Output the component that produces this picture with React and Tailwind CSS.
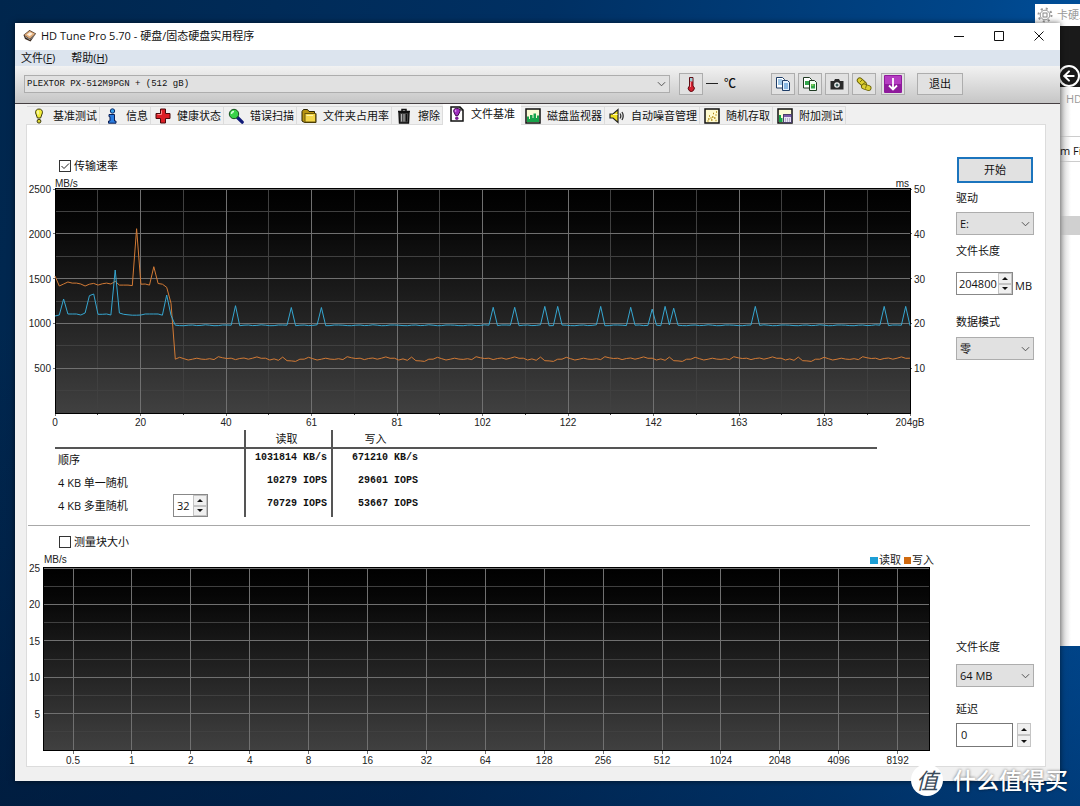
import React from "react";
import { FiArrowLeft } from "react-icons/fi";

/* ---------- DATA ---------- */

const BASE_READ = [982, 982, 980, 976, 974, 980, 982, 976, 978, 984, 980, 974, 976];
const BASE_WRITE = [
  600, 622, 606, 592, 600, 612, 602, 598, 606, 596, 628, 616, 608, 612, 596,
  608, 614, 600, 612, 626, 610, 612, 592, 604, 588, 624, 584, 582, 576, 600,
];

const READ_START = [
  1083, 1094, 1272, 1105, 1105, 1105, 1094, 1116, 1309, 1328, 1102, 1102, 1105,
  1094, 1596, 1116, 1102, 1096, 1092, 1092, 1094, 1105, 1105, 1105, 1105, 1092,
  1317, 1090,
];
const WRITE_START = [
  1529, 1417, 1440, 1462, 1450, 1450, 1440, 1417, 1438, 1446, 1428, 1442, 1450,
  1440, 1470, 1428, 1428, 1428, 1422, 2057, 1438, 1440, 1428, 1633, 1445, 1438,
  1403, 1225,
];
const READ_PEAKS = {
  42: 1198, 55: 1178, 62: 1178, 102: 1180, 107: 1180, 114: 1190, 117: 1190,
  127: 1190, 134: 1180, 139: 1160, 142: 1190, 144: 1170, 163: 1190, 193: 1190,
  198: 1190,
};

const POINTS = 200;
const samples = Array.from({ length: POINTS }, (_, i) => i);

const readSpeed = samples.map(
  (i) => READ_START[i] ?? READ_PEAKS[i] ?? BASE_READ[i % BASE_READ.length]
);
const writeSpeed = samples.map(
  (i) => WRITE_START[i] ?? BASE_WRITE[(i - 28) % BASE_WRITE.length]
);

const results = [
  { label: "顺序", read: "1031814 KB/s", write: "671210 KB/s" },
  { label: "4 KB 单一随机", read: "10279 IOPS", write: "29601 IOPS" },
  { label: "4 KB 多重随机", read: "70729 IOPS", write: "53667 IOPS", queue: true },
];

/* ---------- ICONS ---------- */

const Icon = ({ children }) => (
  <svg viewBox="0 0 16 16" className="w-4 h-4 shrink-0" aria-hidden="true">
    {children}
  </svg>
);

const DriveIcon = () => (
  <Icon>
    <path d="M1.5 7 7.5 2 14 5.500l-5.500 8L3 11z" fill="#3b2a1f" />
    <path d="M2.200 7 7.500 2.700l5.800 3-5.500 5z" fill="#e0ab78" />
    <path d="m4.800 6.600 3.200-2.400 2.800 1.500-3.200 2.600z" fill="#fdf0e0" />
    <path d="m3 8.500 5 3.200 4.800-5" stroke="#9a9a9a" fill="none" />
  </Icon>
);

const BulbIcon = () => (
  <Icon>
    <path d="M8 1C5.5 1 4.3 2.700 4.600 4.900L6.400 10h3.200l1.800-5.100C11.700 2.700 10.500 1 8 1z" fill="#f2ee3a" stroke="#3d3a10" />
    <path d="M7 2.500v4" stroke="#fff" />
    <circle cx="8" cy="13.200" r="1.900" fill="#d8d230" stroke="#3d3a10" />
  </Icon>
);

const InfoIcon = () => (
  <Icon>
    <circle cx="8.500" cy="3" r="2.200" fill="#3aa0e8" stroke="#0b2a66" />
    <path d="M5 6.500h5.500v6.500H12v2.200H4.500V13H6V8.700H5z" fill="#2b7de0" stroke="#0b1f55" />
  </Icon>
);

const HealthIcon = () => (
  <Icon>
    <path d="M5.500 1h5v4.500H15v5h-4.500V15h-5v-4.500H1v-5h4.500z" fill="#dc1f26" stroke="#4a0a0c" />
    <path d="M6.500 2.500v4H2.500" stroke="#ff8a8a" fill="none" />
  </Icon>
);

const ScanIcon = () => (
  <Icon>
    <path d="m9.500 9.500 4.700 4.700" stroke="#101a78" strokeWidth="3.200" strokeLinecap="round" />
    <circle cx="6" cy="6" r="4.700" fill="#39d24a" stroke="#154d1c" />
    <path d="M3.500 6A2.600 2.600 0 0 1 6 3.500" stroke="#d6ffd9" strokeWidth="1.400" fill="none" />
  </Icon>
);

const FolderIcon = () => (
  <Icon>
    <path d="M1 3.500 2.500 1.500h4l1.500 2h5.500v2H15V14.500H3.500L1 13z" fill="#b99412" stroke="#2c2403" />
    <rect x="4" y="5.500" width="10.500" height="8.500" fill="#f3d64a" stroke="#6b560a" />
    <path d="M5.500 7.500H12" stroke="#fff3a8" />
  </Icon>
);

const TrashIcon = () => (
  <Icon>
    <path d="M2 3.500h12M6 3V1.500h4V3" stroke="#111" strokeWidth="1.500" fill="none" />
    <path d="M3 4.500h10l-.5 10.500H3.500z" fill="#4a4a4a" stroke="#111" strokeWidth="1.400" />
    <path d="M5.500 6v7.500M8 6v7.500" stroke="#b5b5b5" />
    <path d="M10.500 6v7.500" stroke="#111" />
  </Icon>
);

const FileBenchIcon = () => (
  <Icon>
    <path d="M2 1h9l3 3v11H2z" fill="#fff" stroke="#111" strokeWidth="1.500" />
    <path d="M11 1v3h3" fill="none" stroke="#111" />
    <path d="M7.800 2.300c-2.400 0-3.500 1.500-3.100 3.400l2 4h2.200l2-4c.4-1.900-.7-3.400-3.100-3.400z" fill="#a02cc0" stroke="#3e0d4d" />
    <path d="M6.700 3.800v2" stroke="#e9b8f5" />
    <circle cx="7.800" cy="12.300" r="1.700" fill="#7b1c96" />
  </Icon>
);

const MonitorIcon = () => (
  <Icon>
    <rect x="1" y="1" width="14" height="14" fill="#fbfbd6" stroke="#111" strokeWidth="1.500" />
    <path d="M2 14V8.500h2V11h1V7h2.500v3h1V5.500H11V10h1V7.500h2V14z" fill="#17a34a" />
  </Icon>
);

const SpeakerIcon = () => (
  <Icon>
    <path d="M1 6h3l5-4.500v13L4 10H1z" fill="#f0e020" stroke="#222" strokeWidth="1.200" />
    <path d="M4 6.500h4.500" stroke="#fffac0" />
    <path d="M11 5.500c1 1.500 1 3.500 0 5M13 4c1.500 2.500 1.500 5.500 0 8" stroke="#333" strokeWidth="1.300" fill="none" />
  </Icon>
);

const RandomIcon = () => (
  <Icon>
    <rect x="1" y="1" width="14" height="14" fill="#fffbd0" stroke="#111" strokeWidth="1.500" />
    <path d="M4 11h1.500M7 12h1.500M10 10h1.500M5 8h1M8 9h1.500M11.500 7h1M9 5.500h1M12 4h1M3.500 13h1M11.500 12.500h1M6.500 10h1" stroke="#b08a10" strokeWidth="1.300" />
  </Icon>
);

const ExtraIcon = () => (
  <Icon>
    <rect x="1" y="1" width="14" height="14" fill="#fbfbd6" stroke="#111" strokeWidth="1.500" />
    <path d="M2 14V7h2v3h1.500v4z" fill="#17a34a" />
    <rect x="6.500" y="6.500" width="8" height="8" fill="#e8e4f4" stroke="#4a3f6b" />
    <path d="M7 8h7" stroke="#7a5aa8" strokeWidth="2" />
    <path d="M8 11h5M8 13h5" stroke="#8a84a0" strokeDasharray="1 1" />
  </Icon>
);

const ThermometerIcon = () => (
  <Icon>
    <path d="M6.500 1.500h3.500V10a3 3 0 1 1-3.500 0z" fill="#d3202f" stroke="#5c0d14" />
    <path d="M7 2h2.500v3.500H7z" fill="#9fd0d6" />
    <path d="M7.500 6v5" stroke="#ff9aa2" />
  </Icon>
);

const CopyTextIcon = () => (
  <Icon>
    <path d="M1.500 1.500h6l2 2V12h-8z" fill="#fff" stroke="#1d3c66" />
    <path d="M3 4h4M3 6h4M3 8h4" stroke="#3f8fd0" />
    <path d="M7.500 4.500h5l2 2v8h-7z" fill="#e4f2ff" stroke="#1d3c66" />
    <path d="M9 8h4M9 10h4M9 12h4" stroke="#2f7fc8" />
  </Icon>
);

const CopyImageIcon = () => (
  <Icon>
    <path d="M1.500 1.500h6l2 2V12h-8z" fill="#fff" stroke="#1f3a22" />
    <path d="M3 5h4v4H3z" fill="#31a64a" />
    <path d="M7.500 4.500h5l2 2v8h-7z" fill="#f2fff2" stroke="#1f3a22" />
    <path d="M9 8h4v4.500H9z" fill="#31a64a" />
    <path d="M9.500 9h2" stroke="#e5f26a" />
  </Icon>
);

const CameraIcon = () => (
  <Icon>
    <path d="M1.500 5H5l1-2h4l1 2h3.500v8.500h-13z" fill="#2a2a2a" />
    <circle cx="8" cy="9" r="2.800" fill="#f4f4f4" />
    <circle cx="8" cy="9" r="1.500" fill="#3c5c5c" />
  </Icon>
);

const PillsIcon = () => (
  <Icon>
    <path d="m3.800 4.500 4 3.500" stroke="#6b6208" strokeWidth="6" strokeLinecap="round" />
    <path d="m3.800 4.500 4 3.500" stroke="#ddd032" strokeWidth="4.200" strokeLinecap="round" />
    <path d="m8 10.500 4.500 1.500" stroke="#6b6208" strokeWidth="6" strokeLinecap="round" />
    <path d="m8 10.500 4.500 1.500" stroke="#ddd032" strokeWidth="4.200" strokeLinecap="round" />
    <path d="m4 6 2-2M6 9l3-2.500M9.500 12.500l1-3.500" stroke="#7a7010" />
  </Icon>
);

const DownloadIcon = () => (
  <svg viewBox="0 0 18 18" className="w-[18px] h-[18px]" aria-hidden="true">
    <rect width="18" height="18" rx="1" fill="#8f1a9c" />
    <rect x="1" y="1" width="16" height="8" fill="#b53cc2" />
    <path d="M9 3v11M5 10.500l4 4 4-4" stroke="#fff" strokeWidth="1.800" fill="none" />
  </svg>
);

const GearIcon = () => (
  <svg viewBox="0 0 16 16" className="w-4 h-4 shrink-0" aria-hidden="true">
    <circle cx="8" cy="8" r="6.500" fill="none" stroke="#999" strokeWidth="2" strokeDasharray="2 3.100" />
    <circle cx="8" cy="8" r="4.800" fill="#fff" stroke="#999" />
    <rect x="6" y="6" width="4" height="4" fill="none" stroke="#888" />
  </svg>
);

const Chevron = () => (
  <svg viewBox="0 0 10 6" className="w-[9px] h-[6px]" aria-hidden="true">
    <path d="m1 1 4 4 4-4" stroke="#444" fill="none" />
  </svg>
);

const Triangle = ({ down }) => (
  <svg viewBox="0 0 6 3" className="w-[6px] h-[3px]" aria-hidden="true">
    <path d={down ? "M0 0h6L3 3z" : "M0 3h6L3 0z"} fill="#111" />
  </svg>
);

const tabs = [
  { name: "基准测试", icon: <BulbIcon /> },
  { name: "信息", icon: <InfoIcon /> },
  { name: "健康状态", icon: <HealthIcon /> },
  { name: "错误扫描", icon: <ScanIcon /> },
  { name: "文件夹占用率", icon: <FolderIcon /> },
  { name: "擦除", icon: <TrashIcon /> },
  { name: "文件基准", icon: <FileBenchIcon />, active: true },
  { name: "磁盘监视器", icon: <MonitorIcon /> },
  { name: "自动噪音管理", icon: <SpeakerIcon /> },
  { name: "随机存取", icon: <RandomIcon /> },
  { name: "附加测试", icon: <ExtraIcon /> },
];

/* ---------- CONTROLS ---------- */

const ToolButton = ({ label, children }) => (
  <button
    type="button"
    aria-label={label}
    className="w-6 h-[22px] flex items-center justify-center border border-[#adadad] bg-[#e1e1e1]"
  >
    {children}
  </button>
);

const Select = ({ id, options }) => (
  <div className="grid items-center">
    <select
      id={id}
      className="col-start-1 row-start-1 w-full h-[23px] appearance-none border border-[#adadad] bg-[#e1e1e1] pl-[3px] text-[11px]"
    >
      {options.map((o) => (
        <option key={o}>{o}</option>
      ))}
    </select>
    <span className="col-start-1 row-start-1 justify-self-end mr-1 pointer-events-none">
      <Chevron />
    </span>
  </div>
);

const SpinButtons = () => (
  <div className="w-[14px] h-full shrink-0 flex flex-col">
    <button type="button" aria-label="增加" className="flex-1 flex items-center justify-center border border-[#c4c4c4] bg-[#f0f0f0]">
      <Triangle />
    </button>
    <button type="button" aria-label="减少" className="flex-1 flex items-center justify-center border border-[#c4c4c4] bg-[#f0f0f0]">
      <Triangle down />
    </button>
  </div>
);

const CheckBox = ({ label, defaultChecked }) => (
  <label className="flex items-center gap-[3px] h-4 pl-8">
    <span className="grid">
      <input
        type="checkbox"
        defaultChecked={defaultChecked}
        className="peer col-start-1 row-start-1 w-3 h-3 appearance-none border border-[#333] bg-white"
      />
      <svg viewBox="0 0 12 12" className="col-start-1 row-start-1 w-3 h-3 hidden peer-checked:block pointer-events-none">
        <path d="m2.500 6 2.500 2.500 5-5" stroke="#222" fill="none" />
      </svg>
    </span>
    {label}
  </label>
);

/* ---------- CHARTS ---------- */

const PlotFill = ({ id }) => (
  <defs>
    <linearGradient id={id} x1="0" y1="0" x2="0" y2="1">
      <stop offset="0" stopColor="#000" />
      <stop offset="0.15" stopColor="#060606" />
      <stop offset="1" stopColor="#404040" />
    </linearGradient>
  </defs>
);

const TransferChart = () => {
  const left = 28;
  const right = 883;
  const top = 11;
  const bottom = 235;
  const stepX = (right - left) / 10;
  const stepY = (bottom - top) / 5;
  const xLabels = ["0", "20", "40", "61", "81", "102", "122", "142", "163", "183", "204gB"];

  const toLine = (values) =>
    values
      .map((v, i) => {
        const x = left + (i * (right - left)) / (POINTS - 1);
        const y = bottom - (v / 2500) * (bottom - top);
        return `${x.toFixed(1)},${y.toFixed(1)}`;
      })
      .join(" ");

  return (
    <svg
      viewBox="0 0 919 252"
      className="block w-full h-auto font-['Liberation_Sans',sans-serif] text-[10px]"
      fill="#222"
      role="img"
      aria-label="传输速率"
    >
      <PlotFill id="plot-transfer" />
      <rect x={left} y={top} width={right - left} height={bottom - top} fill="url(#plot-transfer)" />

      <g shapeRendering="crispEdges">
        {samples.slice(0, 10).map((i) => (
          <path key={i} d={`M${left + (i + 0.5) * stepX} ${top}V${bottom + 2}`} stroke="#404040" />
        ))}
        {samples.slice(0, 5).map((i) => (
          <path key={i} d={`M${left} ${top + (i + 0.5) * stepY}H${right}`} stroke="#404040" />
        ))}
        {xLabels.map((l, i) => (
          <path key={l} d={`M${left + i * stepX} ${top}V${bottom + 3}`} stroke="#707070" />
        ))}
        {samples.slice(0, 5).map((i) => (
          <path key={i} d={`M${left - 2} ${top + i * stepY}H${right + 2}`} stroke="#707070" />
        ))}
        <rect x={left} y={top - 1} width={right - left} height={bottom - top + 1} fill="none" stroke="#000" />
      </g>

      <polyline points={toLine(writeSpeed)} fill="none" stroke="#d27a35" />
      <polyline points={toLine(readSpeed)} fill="none" stroke="#36a6d0" />

      <text x={left} y="9">MB/s</text>
      <text x={right - 1} y="9" textAnchor="end">ms</text>
      {[2500, 2000, 1500, 1000, 500].map((v, i) => (
        <text key={v} x={left - 4} y={top + i * stepY + 4} textAnchor="end">{v}</text>
      ))}
      {[50, 40, 30, 20, 10].map((v, i) => (
        <text key={v} x={right + 4} y={top + i * stepY + 4}>{v}</text>
      ))}
      {xLabels.map((l, i) => (
        <text key={l} x={left + i * stepX} y="248" textAnchor="middle">{l}</text>
      ))}
    </svg>
  );
};

const BlockSizeChart = () => {
  const left = 16;
  const right = 902;
  const top = 15;
  const bottom = 197;
  const firstX = 46;
  const stepX = 58.9;
  const stepY = (bottom - top) / 5;
  const sizes = [0.5, 1, 2, 4, 8, 16, 32, 64, 128, 256, 512, 1024, 2048, 4096, 8192];

  return (
    <svg
      viewBox="0 0 919 213"
      className="block w-full h-auto font-['Liberation_Sans',sans-serif] text-[10px]"
      fill="#222"
      role="img"
      aria-label="测量块大小"
    >
      <PlotFill id="plot-block" />
      <rect x={left} y={top} width={right - left} height={bottom - top} fill="url(#plot-block)" />

      <g shapeRendering="crispEdges">
        {samples.slice(0, 5).map((i) => (
          <path key={i} d={`M${left} ${top + (i + 0.5) * stepY}H${right}`} stroke="#404040" />
        ))}
        {samples.slice(0, 5).map((i) => (
          <path key={i} d={`M${left} ${top + i * stepY}H${right + 1}`} stroke="#707070" />
        ))}
        {sizes.map((s, i) => (
          <path key={s} d={`M${firstX + i * stepX} ${top}V${bottom + 4}`} stroke="#707070" />
        ))}
        <rect x={left} y={top - 1} width={right - left} height={bottom - top + 1} fill="none" stroke="#000" />
      </g>

      <text x="17" y="10">MB/s</text>
      {[25, 20, 15, 10, 5].map((v, i) => (
        <text key={v} x={left - 3} y={top + i * stepY + 4} textAnchor="end">{v}</text>
      ))}
      {sizes.map((s, i) => (
        <text key={s} x={firstX + i * stepX} y="211" textAnchor="middle">{s}</text>
      ))}

      {/* LEGEND */}
      <g className="font-['Noto_Sans_CJK_SC',sans-serif] text-[11px]">
        <rect x="843" y="4" width="8" height="7" fill="#1d9fd6" />
        <text x="852" y="11">读取</text>
        <rect x="877" y="4" width="7" height="7" fill="#d06a10" />
        <text x="885" y="11">写入</text>
      </g>
    </svg>
  );
};

/* ---------- PANELS ---------- */

const ResultsTable = () => (
  <div className="ml-7 mr-[69px]">
    <table className="w-full table-fixed border-collapse">
      <thead>
        <tr className="h-[18px] border-b-2 border-[#555]">
          <th className="w-[190px]" aria-label="测试" />
          <th className="w-[87px] p-0 pr-1 leading-[14px] font-normal border-l-2 border-[#555]">读取</th>
          <th className="w-[90px] p-0 pr-1 leading-[14px] font-normal border-l-2 border-[#555]">写入</th>
          <th aria-hidden="true" />
        </tr>
      </thead>
      <tbody>
        {results.map((row) => (
          <tr key={row.label} className="h-[23px]">
            <th scope="row" className="p-0 font-normal">
              <div className="flex items-center justify-between pl-[3px] pr-9">
                {row.label}
                {row.queue && (
                  <div className="w-[35px] h-[23px] flex border border-[#888] bg-white">
                    <input
                      type="text"
                      aria-label="队列深度"
                      defaultValue="32"
                      className="min-w-0 flex-1 pl-[3px] text-[11px]"
                    />
                    <SpinButtons />
                  </div>
                )}
              </div>
            </th>
            <td className="pb-1 pr-1 pl-0 pt-0 text-right border-l-2 border-[#555] font-['Liberation_Mono',monospace] text-[10px] font-bold whitespace-pre">
              {row.read}
            </td>
            <td className="pb-1 pr-1 pl-0 pt-0 text-right border-l-2 border-[#555] font-['Liberation_Mono',monospace] text-[10px] font-bold whitespace-pre">
              {row.write}
            </td>
            <td />
          </tr>
        ))}
      </tbody>
    </table>
  </div>
);

const TransferSection = () => (
  <section className="flex gap-[10px] pr-[11px] pb-2">
    <div className="flex-1 min-w-0 pt-[33px]">
      <CheckBox label="传输速率" defaultChecked />
      <div className="pt-1">
        <TransferChart />
      </div>
      <ResultsTable />
    </div>

    <div className="w-[78px] shrink-0 flex flex-col pt-8">
      <button type="button" className="h-[26px] mx-px border-2 border-[#1b74bd] bg-[#e1e1e1]">
        开始
      </button>
      <label htmlFor="drive" className="mt-[7px] mb-[6px]">驱动</label>
      <Select id="drive" options={["E:"]} />
      <label htmlFor="length" className="mt-2 mb-[13px]">文件长度</label>
      <div className="flex items-center gap-[2px]">
        <div className="w-[57px] h-[23px] flex border border-[#888] bg-white">
          <input
            id="length"
            type="text"
            defaultValue="204800"
            className="min-w-0 flex-1 pl-[2px] text-[11px]"
          />
          <SpinButtons />
        </div>
        <span className="pt-1">MB</span>
      </div>
      <label htmlFor="pattern" className="mt-[19px] mb-[7px]">数据模式</label>
      <Select id="pattern" options={["零"]} />
    </div>
  </section>
);

const BlockSection = () => (
  <section className="flex gap-[10px] pr-[11px]">
    <div className="flex-1 min-w-0 pt-2">
      <CheckBox label="测量块大小" />
      <div className="pt-[3px]">
        <BlockSizeChart />
      </div>
    </div>

    <div className="w-[78px] shrink-0 flex flex-col pt-[113px]">
      <label htmlFor="block-length" className="mb-[9px]">文件长度</label>
      <Select id="block-length" options={["64 MB"]} />
      <label htmlFor="delay" className="mt-[14px] mb-[6px]">延迟</label>
      <div className="flex h-6 gap-1">
        <input
          id="delay"
          type="text"
          defaultValue="0"
          className="w-[57px] border border-[#777] bg-white pl-1 text-[11px]"
        />
        <SpinButtons />
      </div>
    </div>
  </section>
);

/* ---------- WINDOWS ---------- */

const TitleBar = () => (
  <header className="h-[27px] flex items-center justify-between bg-white pl-[7px] pr-px pb-[2px]">
    <div className="flex items-center gap-[3px]">
      <DriveIcon />
      <h1>HD Tune Pro 5.70 - 硬盘/固态硬盘实用程序</h1>
    </div>
    <div className="flex">
      <button type="button" aria-label="最小化" className="w-10 h-6 flex items-center justify-center">
        <svg viewBox="0 0 10 10" className="w-[10px] h-[10px]"><path d="M0 5.500h10" stroke="#111" /></svg>
      </button>
      <button type="button" aria-label="最大化" className="w-10 h-6 flex items-center justify-center">
        <svg viewBox="0 0 10 10" className="w-[10px] h-[10px]"><path d="M.5.5h9v9h-9z" stroke="#111" fill="none" /></svg>
      </button>
      <button type="button" aria-label="关闭" className="w-10 h-6 flex items-center justify-center">
        <svg viewBox="0 0 10 10" className="w-[10px] h-[10px]"><path d="m.5.5 9 9m0-9-9 9" stroke="#111" /></svg>
      </button>
    </div>
  </header>
);

const Toolbar = () => (
  <div className="h-[38px] flex items-center pl-[9px] pr-[97px] pb-[2px] bg-gradient-to-b from-[#f2f2f2] to-[#c6c6c6] border-b border-[#453f42]">
    <div className="flex-1 grid items-center mr-[9px]">
      <select
        aria-label="硬盘"
        className="col-start-1 row-start-1 w-full h-[18px] appearance-none border border-[#adadad] bg-[#e1e1e1] pl-[2px] font-['Liberation_Mono',monospace] text-[9px]"
      >
        <option>PLEXTOR PX-512M9PGN + (512 gB)</option>
      </select>
      <span className="col-start-1 row-start-1 justify-self-end mr-1 pointer-events-none">
        <Chevron />
      </span>
    </div>
    <ToolButton label="温度">
      <ThermometerIcon />
    </ToolButton>
    <div className="w-[68px] flex items-center gap-[6px] pl-[3px] text-[12px]">
      <span className="w-3 h-px bg-[#222]" />
      <span className="font-medium">℃</span>
    </div>
    <div className="flex gap-[3px] mr-[5px]">
      <ToolButton label="复制文本"><CopyTextIcon /></ToolButton>
      <ToolButton label="复制图像"><CopyImageIcon /></ToolButton>
      <ToolButton label="保存截图"><CameraIcon /></ToolButton>
      <ToolButton label="选项"><PillsIcon /></ToolButton>
    </div>
    <ToolButton label="最小化到托盘"><DownloadIcon /></ToolButton>
    <button type="button" className="ml-3 w-[46px] h-[22px] border border-[#adadad] bg-[#e1e1e1]">
      退出
    </button>
  </div>
);

const TabBar = () => (
  <div role="tablist" className="h-5 flex items-end pl-px">
    {tabs.map((tab) => (
      <button
        key={tab.name}
        type="button"
        role="tab"
        aria-selected={Boolean(tab.active)}
        className={
          tab.active
            ? "relative h-[21px] -mb-px flex items-center gap-[6px] px-[6px] pb-[2px] bg-white whitespace-nowrap"
            : "h-[18px] flex items-center gap-[6px] pl-1 pr-[2px] border-t border-r border-[#dcdcdc] bg-[#f0f0f0] whitespace-nowrap"
        }
      >
        {tab.icon}
        {tab.name}
      </button>
    ))}
  </div>
);

// Part of another window that peeks out at the right edge of the desktop
const BackWindow = () => (
  <aside className="absolute top-1 right-0 w-[45px] h-[642px] flex flex-col overflow-hidden bg-white whitespace-nowrap">
    <div className="h-[22px] flex items-center gap-1 pl-[2px] text-[#999] shrink-0">
      <GearIcon />
      卡硬工
    </div>
    <div className="h-[61px] shrink-0 flex items-end justify-end overflow-hidden bg-[#1a1a1a]">
      <span className="w-[22px] h-[22px] shrink-0 flex items-center justify-center rounded-full border-2 border-white text-white text-base">
        <FiArrowLeft strokeWidth={3} />
      </span>
    </div>
    <div className="flex flex-col pl-[25px] bg-gradient-to-r from-[#cfcfcf] to-white from-55% to-80% flex-1">
      <div className="h-[50px] pt-1 pl-[6px] text-[#999] border-b border-[#ccc]">HD</div>
      <div className="h-[25px] pt-[6px] border-b border-[#ccc]">m Fi</div>
      <div className="mt-[54px] h-[19px] bg-[#d0d0d0]" />
    </div>
  </aside>
);

const Watermark = () => (
  <div className="absolute bottom-[10px] right-3 flex items-center gap-[10px] text-white pointer-events-none">
    <span className="w-8 h-8 flex items-center justify-center rounded-full bg-white text-[#3a4a5a] text-[22px] leading-8 italic">
      值
    </span>
    <span className="text-[23px] leading-8 font-medium [text-shadow:0_0_3px_rgba(0,0,0,0.6)]">什么值得买</span>
  </div>
);

const App = () => {
  return (
    <div className="relative min-h-screen overflow-hidden pt-[23px] pl-[15px] pr-5 bg-[linear-gradient(to_bottom,transparent_40%,rgba(0,8,30,0.35)),linear-gradient(100deg,#00264d_0%,#003063_45%,#00468a_80%,#0058ac_100%)] font-['Open_Sans','Noto_Sans_CJK_SC',sans-serif] text-[11px] leading-4 text-[#111]">
      <BackWindow />

      {/* MAIN WINDOW */}
      <main className="relative bg-[#f0f0f0] shadow-[0_0_6px_rgba(0,0,0,0.6)]">
        <TitleBar />

        <nav className="h-4 flex items-center gap-4 pl-[6px] bg-[#dce4ee]">
          <button type="button">文件(<u>F</u>)</button>
          <button type="button">帮助(<u>H</u>)</button>
        </nav>

        <Toolbar />

        <div className="pl-[11px] pr-[14px] pb-[14px]">
          <TabBar />
          <div className="bg-white border border-[#dcdcdc]">
            <TransferSection />
            <hr className="ml-px mr-[15px] border-[#a8a8a8]" />
            <BlockSection />
          </div>
        </div>
      </main>

      <Watermark />
    </div>
  );
};

export default App;
